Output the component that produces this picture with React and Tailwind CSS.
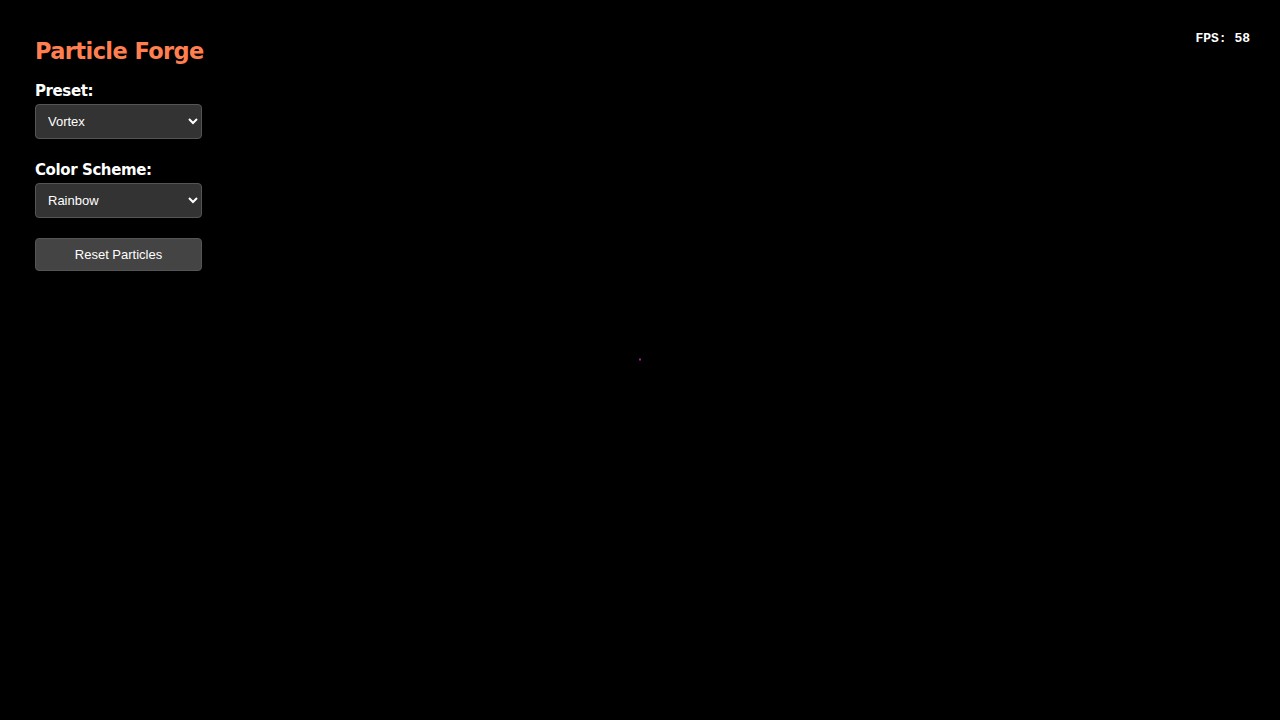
import React, { useState } from 'react';

const PRESETS = ['Vortex', 'Fountain', 'Explosion', 'Galaxy'];
const SCHEMES = ['Rainbow', 'Fire', 'Ocean', 'Neon'];

const App = () => {
  const [preset, setPreset] = useState('Vortex');
  const [scheme, setScheme] = useState('Rainbow');

  return (
    <div className="relative w-full h-[720px] bg-black overflow-hidden text-white">
      {/* particle canvas */}
      <svg className="absolute inset-0 w-full h-full" viewBox="0 0 1280 720">
        <rect x="639" y="358.5" width="2" height="2" fill="#b0208a" />
      </svg>

      {/* controls */}
      <div className="absolute top-5 left-5 p-[15px] w-[197px] font-['DejaVu_Sans',Verdana,sans-serif]">
        <h2 className="text-[22.5px] leading-[28px] font-bold text-[#ff7f50] mt-[2px] mb-[17px] whitespace-nowrap tracking-[-0.6px]">
          Particle Forge
        </h2>

        <label className="block text-[15px] leading-[18px] font-bold tracking-[-0.4px] mb-[4px]">Preset:</label>
        <select
          value={preset}
          onChange={e => setPreset(e.target.value)}
          className="block w-full h-[35px] px-[8px] bg-[#333] border border-[#555] rounded-[4px] text-white text-[13px] font-['Liberation_Sans',Arial,sans-serif]"
        >
          {PRESETS.map(p => <option key={p}>{p}</option>)}
        </select>

        <label className="block text-[15px] leading-[18px] font-bold tracking-[-0.4px] mb-[4px] mt-[22px]">Color Scheme:</label>
        <select
          value={scheme}
          onChange={e => setScheme(e.target.value)}
          className="block w-full h-[35px] px-[8px] bg-[#333] border border-[#555] rounded-[4px] text-white text-[13px] font-['Liberation_Sans',Arial,sans-serif]"
        >
          {SCHEMES.map(s => <option key={s}>{s}</option>)}
        </select>

        <button className="block w-full h-[33px] mt-[20px] bg-[#444] border border-[#555] rounded-[4px] text-white text-[13px] font-['Liberation_Sans',Arial,sans-serif] cursor-pointer">
          Reset Particles
        </button>
      </div>

      {/* fps */}
      <div className="absolute top-[31px] right-[30px] font-['Liberation_Mono','Courier_New',monospace] text-[13px] leading-[16px] font-semibold text-white whitespace-pre">
        FPS: 58
      </div>
    </div>
  );
};

export default App;
